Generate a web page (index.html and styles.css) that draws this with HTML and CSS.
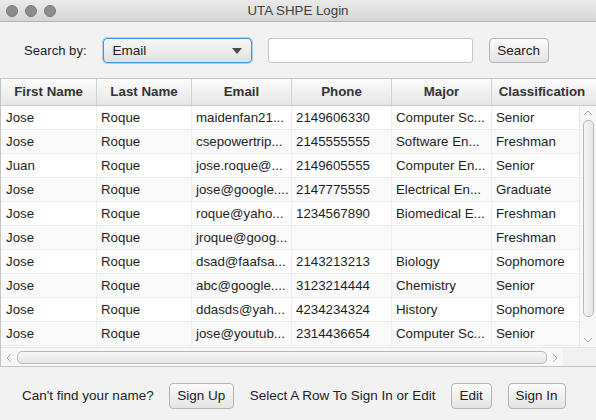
FILE: index.html
```html
<!DOCTYPE html>
<html>
<head>
<meta charset="utf-8">
<link rel="stylesheet" href="styles.css">
</head>
<body>
<div class="window">
  <div class="titlebar">
    <div class="lights"><span class="light"></span><span class="light"></span><span class="light"></span></div>
    <div class="title">UTA SHPE Login</div>
  </div>
  <div class="toolbar">
    <span class="label">Search by:</span>
    <div class="combo"><span>Email</span><svg class="caret" width="10" height="6" viewBox="0 0 10 6"><path d="M0 0H10L5 6Z" fill="#4a4a4a"/></svg></div>
    <div class="field"></div>
    <div class="btn btn-search">Search</div>
  </div>
  <div class="table">
    <div class="thead">
      <div class="th">First Name</div>
      <div class="th">Last Name</div>
      <div class="th">Email</div>
      <div class="th">Phone</div>
      <div class="th">Major</div>
      <div class="th">Classification</div>
      <div class="th filler"></div>
    </div>
    <div class="tbody">
      <div class="rows">
        <div class="row"><div class="td">Jose</div><div class="td">Roque</div><div class="td">maidenfan21...</div><div class="td">2149606330</div><div class="td">Computer Sc...</div><div class="td">Senior</div></div>
        <div class="row"><div class="td">Jose</div><div class="td">Roque</div><div class="td">csepowertrip...</div><div class="td">2145555555</div><div class="td">Software En...</div><div class="td">Freshman</div></div>
        <div class="row"><div class="td">Juan</div><div class="td">Roque</div><div class="td">jose.roque@...</div><div class="td">2149605555</div><div class="td">Computer En...</div><div class="td">Senior</div></div>
        <div class="row"><div class="td">Jose</div><div class="td">Roque</div><div class="td">jose@google....</div><div class="td">2147775555</div><div class="td">Electrical En...</div><div class="td">Graduate</div></div>
        <div class="row"><div class="td">Jose</div><div class="td">Roque</div><div class="td">roque@yaho...</div><div class="td">1234567890</div><div class="td">Biomedical E...</div><div class="td">Freshman</div></div>
        <div class="row"><div class="td">Jose</div><div class="td">Roque</div><div class="td">jroque@goog...</div><div class="td"></div><div class="td"></div><div class="td">Freshman</div></div>
        <div class="row"><div class="td">Jose</div><div class="td">Roque</div><div class="td">dsad@faafsa...</div><div class="td">2143213213</div><div class="td">Biology</div><div class="td">Sophomore</div></div>
        <div class="row"><div class="td">Jose</div><div class="td">Roque</div><div class="td">abc@google....</div><div class="td">3123214444</div><div class="td">Chemistry</div><div class="td">Senior</div></div>
        <div class="row"><div class="td">Jose</div><div class="td">Roque</div><div class="td">ddasds@yah...</div><div class="td">4234234324</div><div class="td">History</div><div class="td">Sophomore</div></div>
        <div class="row"><div class="td">Jose</div><div class="td">Roque</div><div class="td">jose@youtub...</div><div class="td">2314436654</div><div class="td">Computer Sc...</div><div class="td">Senior</div></div>
        <div class="row"><div class="td"></div><div class="td"></div><div class="td"></div><div class="td"></div><div class="td"></div><div class="td"></div></div>
      </div>
      <div class="vscroll">
        <svg class="arrow" width="16" height="14" viewBox="0 0 16 14"><path d="M4 9L8 5L12 9" fill="none" stroke="#a8a8a8" stroke-width="1"/></svg>
        <div class="vtrack"><div class="vthumb"></div></div>
        <svg class="arrow" width="16" height="14" viewBox="0 0 16 14"><path d="M4 5L8 9L12 5" fill="none" stroke="#a8a8a8" stroke-width="1"/></svg>
      </div>
    </div>
    <div class="hscroll">
      <svg class="harrow" width="16" height="19" viewBox="0 0 16 19"><path d="M10 6L6 10L10 14" fill="none" stroke="#a8a8a8" stroke-width="1"/></svg>
      <div class="htrack"><div class="hthumb"></div></div>
      <svg class="harrow" width="16" height="19" viewBox="0 0 16 19"><path d="M6 6L10 10L6 14" fill="none" stroke="#a8a8a8" stroke-width="1"/></svg>
      <div class="corner"></div>
    </div>
  </div>
  <div class="footer">
    <span class="label">Can't find your name?</span>
    <div class="btn btn-signup">Sign Up</div>
    <span class="label label-select">Select A Row To Sign In or Edit</span>
    <div class="btn btn-edit">Edit</div>
    <div class="btn btn-signin">Sign In</div>
  </div>
</div>
</body>
</html>
```

FILE: styles.css
```css
* { box-sizing: border-box; }
html, body { margin: 0; padding: 0; }
body {
  width: 596px;
  height: 420px;
  overflow: hidden;
  font-family: "Liberation Sans", Arial, sans-serif;
  font-size: 13.5px;
  color: #222;
  background: #f2f2f2;
}
.window {
  width: 596px;
  height: 420px;
  display: flex;
  flex-direction: column;
  background: #f2f2f2;
}
.titlebar {
  height: 22px;
  flex: none;
  display: flex;
  align-items: center;
  position: relative;
  background: linear-gradient(#ebebeb, #d5d5d5);
  border-bottom: 1px solid #b3b3b3;
}
.lights {
  display: flex;
  gap: 7px;
  padding-left: 6px;
  padding-top: 1px;
}
.light {
  width: 12px;
  height: 12px;
  border-radius: 50%;
  background: #8c8c8c;
  border: 1px solid #7a7a7a;
}
.title {
  position: absolute;
  left: 0;
  right: 0;
  top: 3px;
  text-align: center;
  color: #3e3e3e;
  font-size: 13.3px;
}
.toolbar {
  height: 57px;
  flex: none;
  display: flex;
  align-items: center;
  gap: 16px;
  padding-left: 24px;
  padding-top: 1px;
  border-bottom: 1px solid #c4c4c4;
}
.toolbar .label { font-size: 13.1px; }
.label { color: #222; }
.combo {
  width: 149px;
  height: 25px;
  border: 1px solid #3d9ad8;
  box-shadow: 0 0 0 1px #a9d0ee;
  border-radius: 4px;
  background: linear-gradient(#f6f6f6, #e2e2e2);
  display: flex;
  align-items: center;
  justify-content: space-between;
  padding: 0 9px 0 9px;
}
.caret { margin-top: 1px; }
.field {
  width: 205px;
  height: 25px;
  background: #fff;
  border: 1px solid #c6c6c6;
  border-radius: 3px;
}
.btn {
  height: 25px;
  display: flex;
  align-items: center;
  justify-content: center;
  border: 1px solid #b4b4b4;
  border-radius: 4px;
  background: linear-gradient(#fbfbfb, #e4e4e4);
  color: #222;
}
.btn-search { width: 60px; }
.table {
  height: 288px;
  flex: none;
  display: flex;
  flex-direction: column;
  border-left: 1px solid #c4c4c4;
  border-bottom: 1px solid #c4c4c4;
  background: #fff;
  font-size: 13.3px;
}
.thead {
  height: 27px;
  flex: none;
  display: flex;
  background: linear-gradient(#fcfcfc, #e6e6e6);
  border-bottom: 1px solid #c8c8c8;
  overflow: hidden;
}
.th {
  flex: none;
  font-weight: bold;
  color: #333;
  text-align: center;
  line-height: 26px;
  border-right: 1px solid #d2d2d2;
  white-space: nowrap;
}
.th:nth-child(1) { width: 96px; }
.th:nth-child(2) { width: 95px; }
.th:nth-child(3) { width: 100px; }
.th:nth-child(4) { width: 100px; }
.th:nth-child(5) { width: 100px; }
.th:nth-child(6) { width: 100px; border-right: 0; }
.th.filler { flex: 1; border-right: 0; }
.tbody {
  height: 241px;
  flex: none;
  display: flex;
  overflow: hidden;
}
.rows {
  flex: 1;
  overflow: hidden;
}
.row {
  display: flex;
  height: 24px;
  border-bottom: 1px solid #efefef;
  width: 600px;
}
.row:nth-child(even) { background: #f9f9f9; }
.td {
  flex: none;
  padding-left: 4px;
  line-height: 23px;
  white-space: nowrap;
  border-right: 1px solid #efefef;
  color: #1e1e1e;
}
.td:nth-child(1) { width: 96px; padding-left: 5px; }
.td:nth-child(2) { width: 95px; }
.td:nth-child(3) { width: 100px; }
.td:nth-child(4) { width: 100px; }
.td:nth-child(5) { width: 100px; }
.td:nth-child(6) { width: 100px; }
.vscroll {
  width: 17px;
  flex: none;
  display: flex;
  flex-direction: column;
  background: #f7f7f7;
  border-left: 1px solid #e6e6e6;
}
.arrow { flex: none; display: block; }
.vtrack {
  flex: 1;
  padding: 0 2px 0 3px;
  display: flex;
  flex-direction: column;
}
.vthumb {
  height: 197px;
  border: 1px solid #b8b8b8;
  border-radius: 5px;
  background: linear-gradient(90deg, #f6f6f6, #e6e6e6);
}
.hscroll {
  height: 19px;
  flex: none;
  display: flex;
  align-items: stretch;
  background: #f7f7f7;
  border-top: 1px solid #e6e6e6;
}
.harrow { flex: none; display: block; }
.htrack {
  width: 530px;
  flex: none;
  padding: 3px 0 2px 0;
  display: flex;
}
.hthumb {
  flex: 1;
  border: 1px solid #b8b8b8;
  border-radius: 5px;
  background: linear-gradient(#f6f6f6, #e6e6e6);
}
.corner {
  flex: 1;
  background: #f0f0f0;
}
.footer {
  flex: 1;
  display: flex;
  align-items: center;
  padding-left: 22px;
  padding-top: 4px;
  gap: 15px;
}
.footer .btn { height: 26px; }
.btn-signup { width: 65px; }
.label-select { margin-left: 1px; }
.btn-edit { width: 41px; }
.btn-signin { width: 58px; margin-left: 1px; }
```
